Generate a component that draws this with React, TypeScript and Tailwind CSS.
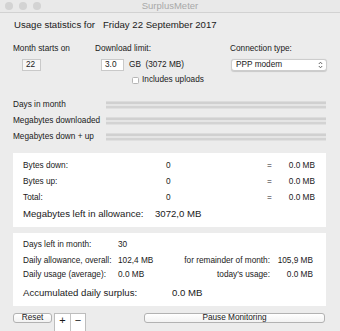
import React from "react";

const font = { fontFamily: '"Liberation Sans", Arial, sans-serif' };

function Groove() {
  return (
    <div className="w-[220px] flex flex-col">
      <div className="h-[1px] bg-[#dcdcdc]" />
      <div className="h-[2px] bg-[#d0d0d0]" />
      <div className="h-[2px] bg-[#e5e5e5]" />
      <div className="h-[2px] bg-[#d3d3d3]" />
      <div className="h-[1px] bg-[#e0e0e0]" />
    </div>
  );
}

function ByteRow({ label, value, mb }: { label: string; value: string; mb: string }) {
  return (
    <div className="flex items-center h-4 text-[8.25px]">
      <div className="w-[143px]">{label}</div>
      <div className="w-[101px]">{value}</div>
      <div className="w-[10px]">=</div>
      <div className="w-[38px] text-right">{mb}</div>
    </div>
  );
}

export default function App() {
  const barras = ["Days in month", "Megabytes downloaded", "Megabytes down + up"];

  return (
    <div
      className="w-[340px] h-[331px] bg-[#ececec] overflow-hidden text-[#1a1a1a]"
      style={font}
    >
      {/* barra de titulo */}
      <div className="relative h-[13px] border-b border-[#d2d2d2] bg-[#e9e9e9] flex items-center">
        <div className="flex gap-[6px] pl-[5px]">
          <span className="w-[8px] h-[8px] rounded-full bg-[#d3d3d3]" />
          <span className="w-[8px] h-[8px] rounded-full bg-[#d3d3d3]" />
          <span className="w-[8px] h-[8px] rounded-full bg-[#d3d3d3]" />
        </div>
        <div className="absolute inset-0 flex items-center justify-center text-[9.5px] text-[#a8a8a8]">
          SurplusMeter
        </div>
      </div>

      <div className="px-[13px]">
        <div className="mt-[5px] h-[14px] flex items-center text-[9.6px] pl-[1px]">
          <span className="w-[89px]">Usage statistics for</span>
          <span>Friday 22 September 2017</span>
        </div>

        <div className="mt-[12px] h-[11px] flex items-center text-[8.25px]">
          <div className="w-[82px]">Month starts on</div>
          <div className="w-[135px]">Download limit:</div>
          <div>Connection type:</div>
        </div>

        <div className="mt-[4px] h-[12px] flex items-center text-[8.25px]">
          <div className="w-[82px]">
            <div className="ml-[9px] w-[19px] h-[12px] bg-[#f7f7f7] border border-[#c9c9c9] flex items-center pl-[3px]">
              22
            </div>
          </div>
          <div className="w-[136px] flex items-center">
            <div className="ml-[6px] w-[23px] h-[12px] bg-white border border-[#c9c9c9] flex items-center pl-[3px]">
              3.0
            </div>
            <span className="ml-[5px]">GB&nbsp; (3072 MB)</span>
          </div>
          <div className="w-[96px] h-[12px] bg-white rounded-[3px] border border-[#cdcdcd] shadow-[0_0.5px_1px_rgba(0,0,0,0.15)] flex items-center justify-between pl-[4px] pr-[3px]">
            <span>PPP modem</span>
            <svg width="5" height="8" viewBox="0 0 5 8" fill="none" stroke="#555" strokeWidth="0.9">
              <path d="M0.8 3 L2.5 1.2 L4.2 3" />
              <path d="M0.8 5 L2.5 6.8 L4.2 5" />
            </svg>
          </div>
        </div>

        <div className="mt-[5px] h-[8px] flex items-center text-[8.25px]">
          <div className="ml-[119px] w-[7px] h-[7px] bg-white border border-[#b5b5b5] rounded-[1.5px]" />
          <span className="ml-[3px]">Includes uploads</span>
        </div>

        <div className="mt-[13px]">
          {barras.map((b) => (
            <div key={b} className="h-4 flex items-center text-[8.25px]">
              <div className="w-[93px]">{b}</div>
              <Groove />
            </div>
          ))}
        </div>

        <div className="mt-[8px] w-[313px] h-[74px] bg-white pl-[10px] pt-[5px]">
          <ByteRow label="Bytes down:" value="0" mb="0.0 MB" />
          <ByteRow label="Bytes up:" value="0" mb="0.0 MB" />
          <ByteRow label="Total:" value="0" mb="0.0 MB" />
          <div className="flex items-center h-4 text-[9.6px]">
            <div className="w-[132px]">Megabytes left in allowance:</div>
            <div>3072,0 MB</div>
          </div>
        </div>

        <div className="mt-[6px] w-[313px] h-[73px] bg-white pl-[10px] pr-[13px] pt-[4px] text-[8.25px]">
          <div className="flex items-center h-4">
            <div className="w-[95px]">Days left in month:</div>
            <div>30</div>
          </div>
          <div className="flex items-center h-4">
            <div className="w-[95px]">Daily allowance, overall:</div>
            <div className="w-[60px]">102,4 MB</div>
            <div className="flex-1 text-right">for remainder of month:</div>
            <div className="w-[43px] text-right">105,9 MB</div>
          </div>
          <div className="flex items-center h-[13px]">
            <div className="w-[95px]">Daily usage (average):</div>
            <div className="w-[60px]">0.0 MB</div>
            <div className="flex-1 text-right">today's usage:</div>
            <div className="w-[43px] text-right">0.0 MB</div>
          </div>
          <div className="flex items-center h-[22px] text-[9.6px]">
            <div className="w-[149px]">Accumulated daily surplus:</div>
            <div>0.0 MB</div>
          </div>
        </div>

        <div className="mt-[7px] flex items-start text-[8.25px]">
          <button className="w-[39px] h-[10px] rounded-[3px] border border-[#b2b2b2] bg-[linear-gradient(to_bottom,#ffffff,#f2f2f2)] flex items-center justify-center leading-none">
            Reset
          </button>
          <div className="ml-[2px] w-[32px] h-[18px] flex border-x border-t border-[#bdbdbd] bg-white">
            <div className="w-[16px] border-r border-[#c4c4c4] flex items-start justify-center text-[11px] leading-[11px] pt-[1px]">
              +
            </div>
            <div className="flex-1 flex items-start justify-center text-[11px] leading-[11px] pt-[1px]">
              −
            </div>
          </div>
          <button className="ml-[58px] w-[181px] h-[10px] rounded-[3px] border border-[#b2b2b2] bg-[linear-gradient(to_bottom,#ffffff,#f2f2f2)] flex items-center justify-center leading-none">
            Pause Monitoring
          </button>
        </div>
      </div>
    </div>
  );
}
